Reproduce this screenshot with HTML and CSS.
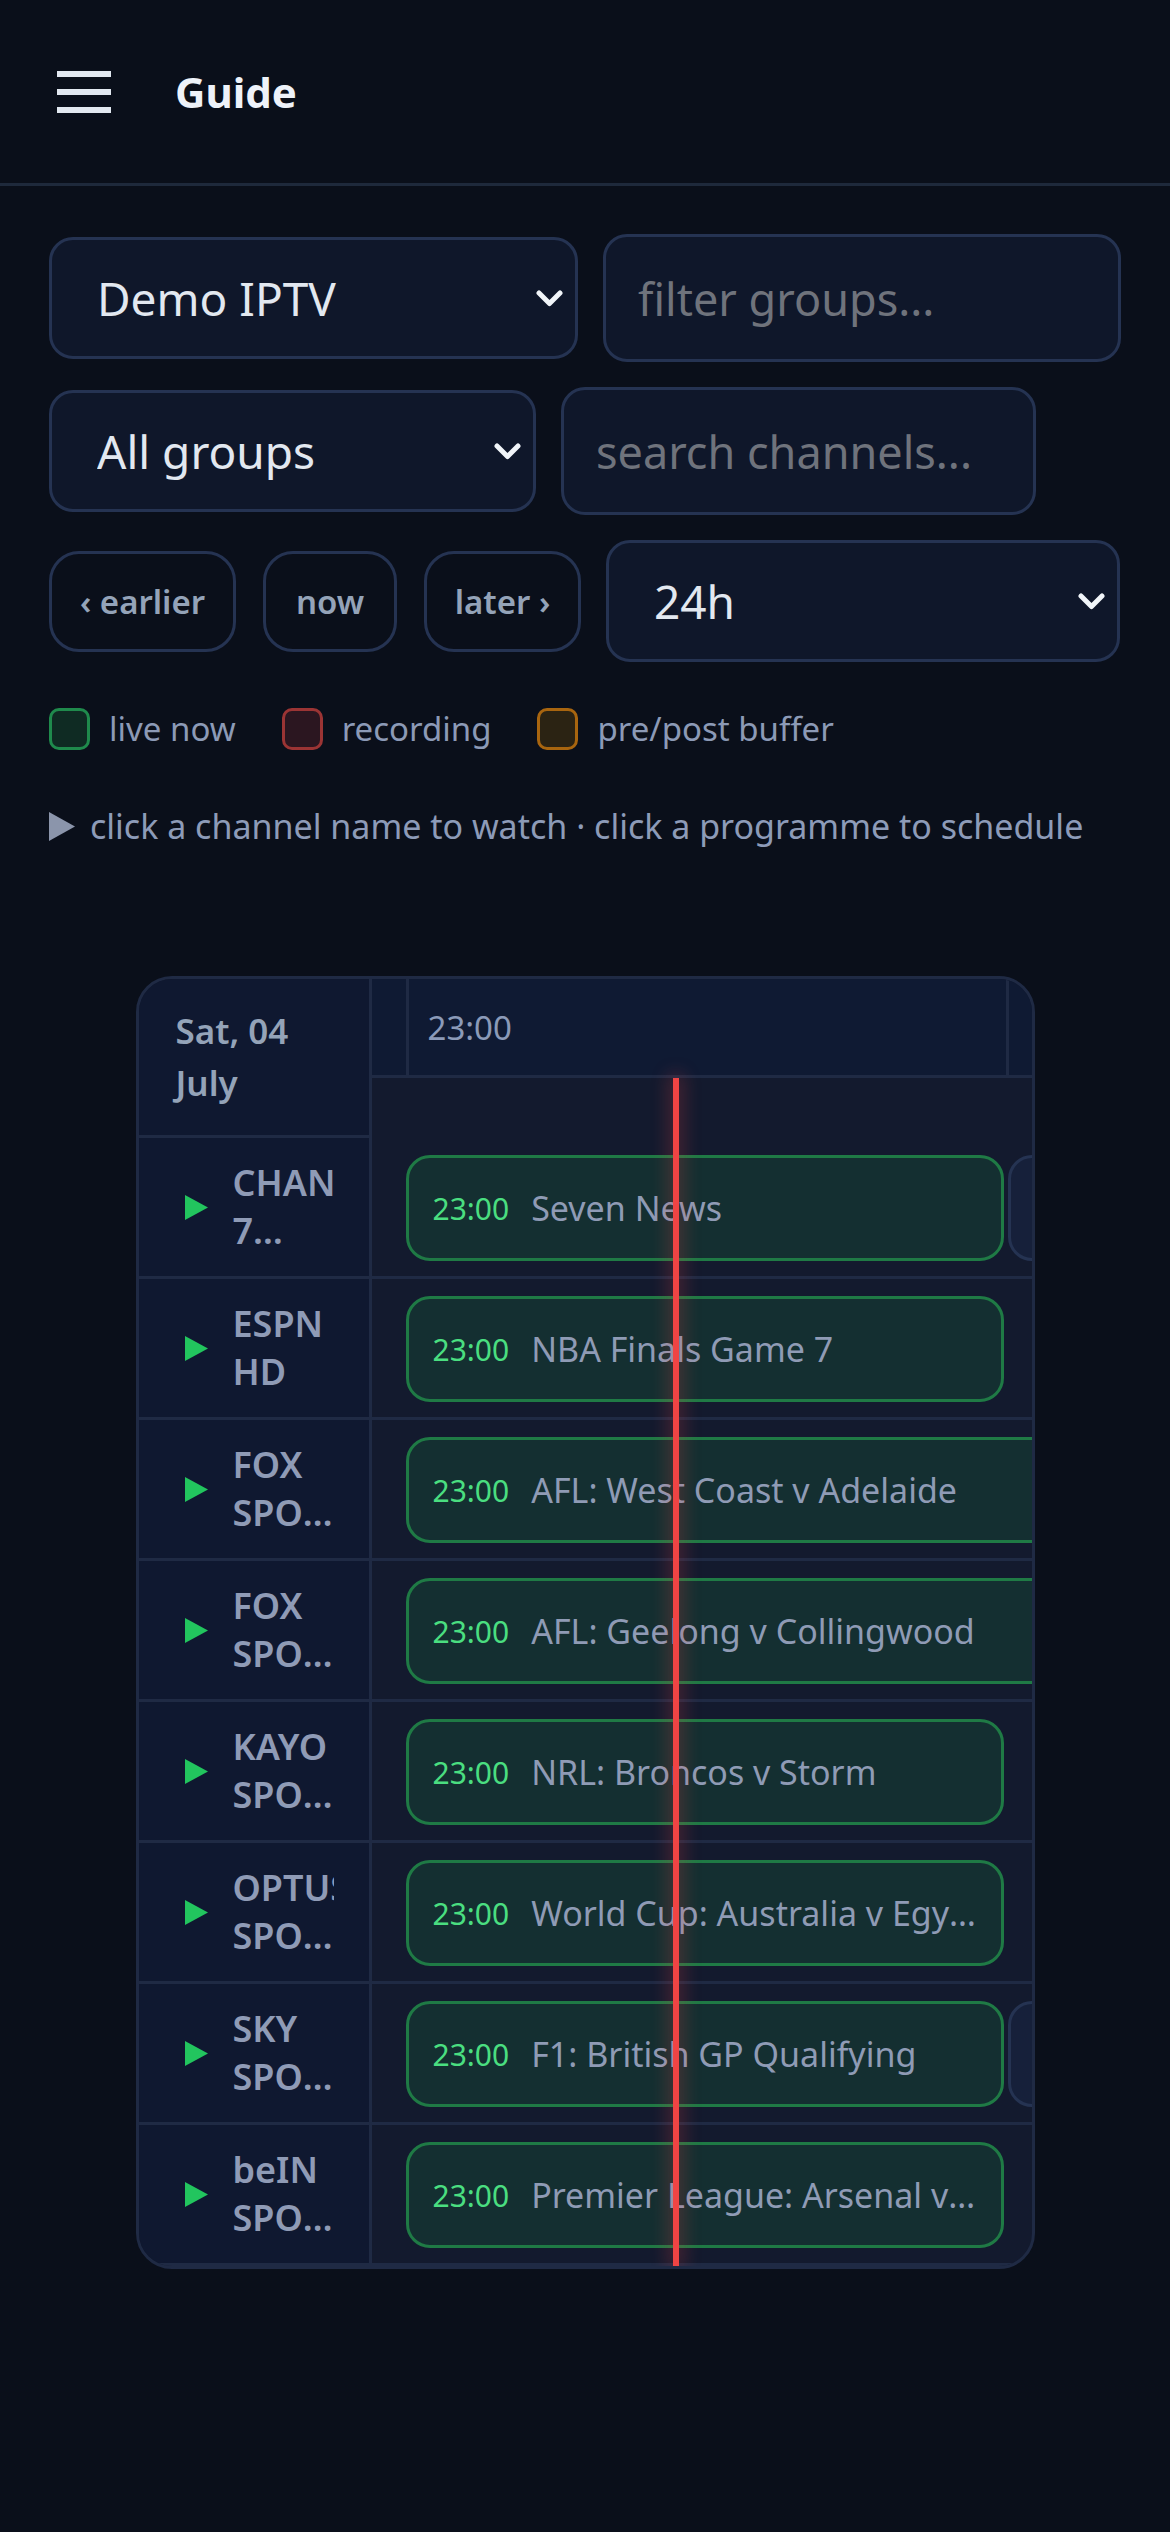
FILE: index.html
```html
<!DOCTYPE html>
<html lang="en">
<head>
    <meta charset="UTF-8">
    <meta name="viewport" content="width=device-width, initial-scale=1.0">
    <title>Guide</title>
    <link rel="stylesheet" href="styles.css">
</head>
<body>

    <!-- Top bar -->
    <header class="topbar">
        <button class="menu-btn" aria-label="menu"><span></span><span></span><span></span></button>
        <h1>Guide</h1>
    </header>

    <main class="page">

        <!-- Source / group / window controls -->
        <div class="toolbar">
            <select class="field field-select w-source"><option>Demo IPTV</option></select>
            <input class="field w-filter" type="text" placeholder="filter groups...">
            <select class="field field-select w-group"><option>All groups</option></select>
            <input class="field w-search" type="text" placeholder="search channels...">
            <div class="nav-group">
                <button class="nav-btn w-earlier">‹ earlier</button>
                <button class="nav-btn w-now">now</button>
                <button class="nav-btn w-later">later ›</button>
            </div>
            <select class="field field-select w-span"><option>24h</option></select>
        </div>

        <div class="legend">
            <span class="legend-item"><i class="swatch swatch-live"></i>live now</span>
            <span class="legend-item"><i class="swatch swatch-rec"></i>recording</span>
            <span class="legend-item"><i class="swatch swatch-buf"></i>pre/post buffer</span>
        </div>

        <p class="hint">
            <svg class="hint-play" viewBox="0 0 26 29"><path d="M0 0 L26 14.5 L0 29 Z"/></svg>
            click a channel name to watch · click a programme to schedule
        </p>

        <!-- EPG grid: 600px per hour, track starts at 22:56:42 -->
        <div class="guide">
            <div class="guide-head">
                <div class="date-cell">Sat, 04 July</div>
                <div class="time-head">
                    <div class="ruler">
                        <div class="slot slot-cut"></div>
                        <div class="slot">23:00</div>
                        <div class="slot"></div>
                    </div>
                </div>
            </div>

            <div class="row">
                <a class="chan" href="#"><svg class="play" viewBox="0 0 23 25"><path d="M0 0 L23 12.5 L0 25 Z"/></svg><span class="chan-name">CHANNEL 7 SYDNEY</span></a>
                <div class="track">
                    <div class="prog live" style="left:34px;width:598px"><span class="prog-time">23:00</span><span class="prog-title">Seven News</span></div>
                    <div class="prog" style="left:636px;width:598px"><span class="prog-time">00:00</span><span class="prog-title">Late News</span></div>
                </div>
            </div>
            <div class="row">
                <a class="chan" href="#"><svg class="play" viewBox="0 0 23 25"><path d="M0 0 L23 12.5 L0 25 Z"/></svg><span class="chan-name">ESPN HD</span></a>
                <div class="track">
                    <div class="prog live" style="left:34px;width:598px"><span class="prog-time">23:00</span><span class="prog-title">NBA Finals Game 7</span></div>
                </div>
            </div>
            <div class="row">
                <a class="chan" href="#"><svg class="play" viewBox="0 0 23 25"><path d="M0 0 L23 12.5 L0 25 Z"/></svg><span class="chan-name">FOX SPORTS 501</span></a>
                <div class="track">
                    <div class="prog live" style="left:34px;width:1798px"><span class="prog-time">23:00</span><span class="prog-title">AFL: West Coast v Adelaide</span></div>
                </div>
            </div>
            <div class="row">
                <a class="chan" href="#"><svg class="play" viewBox="0 0 23 25"><path d="M0 0 L23 12.5 L0 25 Z"/></svg><span class="chan-name">FOX SPORTS 503</span></a>
                <div class="track">
                    <div class="prog live" style="left:34px;width:1798px"><span class="prog-time">23:00</span><span class="prog-title">AFL: Geelong v Collingwood</span></div>
                </div>
            </div>
            <div class="row">
                <a class="chan" href="#"><svg class="play" viewBox="0 0 23 25"><path d="M0 0 L23 12.5 L0 25 Z"/></svg><span class="chan-name">KAYO SPORTS 1</span></a>
                <div class="track">
                    <div class="prog live" style="left:34px;width:598px"><span class="prog-time">23:00</span><span class="prog-title">NRL: Broncos v Storm</span></div>
                </div>
            </div>
            <div class="row">
                <a class="chan" href="#"><svg class="play" viewBox="0 0 23 25"><path d="M0 0 L23 12.5 L0 25 Z"/></svg><span class="chan-name">OPTUS SPORT 1</span></a>
                <div class="track">
                    <div class="prog live" style="left:34px;width:598px"><span class="prog-time">23:00</span><span class="prog-title">World Cup: Australia v Egypt</span></div>
                </div>
            </div>
            <div class="row">
                <a class="chan" href="#"><svg class="play" viewBox="0 0 23 25"><path d="M0 0 L23 12.5 L0 25 Z"/></svg><span class="chan-name">SKY SPORTS F1</span></a>
                <div class="track">
                    <div class="prog live" style="left:34px;width:598px"><span class="prog-time">23:00</span><span class="prog-title">F1: British GP Qualifying</span></div>
                    <div class="prog" style="left:636px;width:598px"><span class="prog-time">00:00</span><span class="prog-title">F1 Show</span></div>
                </div>
            </div>
            <div class="row">
                <a class="chan" href="#"><svg class="play" viewBox="0 0 23 25"><path d="M0 0 L23 12.5 L0 25 Z"/></svg><span class="chan-name">beIN SPORTS 1</span></a>
                <div class="track">
                    <div class="prog live" style="left:34px;width:598px"><span class="prog-time">23:00</span><span class="prog-title">Premier League: Arsenal v Chelsea</span></div>
                </div>
            </div>

            <!-- current time marker (23:27) -->
            <div class="now-line" style="left:534px"></div>
        </div>

    </main>

</body>
</html>
```

FILE: styles.css
```css
body {
    margin: 0;
    background-color: #0a0f1a;
    font-family: "Noto Sans", "Open Sans", sans-serif;
    color: #e2e8f0;
}

/* Top bar */
.topbar {
    height: 183px;
    border-bottom: 3px solid #1e293b;
    display: flex;
    align-items: center;
    gap: 64px;
    padding-left: 57px;
}

.menu-btn {
    width: 54px;
    height: 42px;
    padding: 0;
    border: none;
    background: none;
    display: flex;
    flex-direction: column;
    justify-content: space-between;
}

.menu-btn span {
    display: block;
    height: 6px;
    background-color: #e2e8f0;
}

.topbar h1 {
    margin: 0;
    font-size: 42px;
    font-weight: 700;
    color: #eef2f9;
}

.page {
    padding: 48px 49px 0;
}

/* Controls */
.toolbar {
    display: flex;
    flex-wrap: wrap;
    align-items: center;
    gap: 25px;
}

.field {
    box-sizing: border-box;
    height: 128px;
    padding: 0 32px;
    border: 3px solid #253352;
    border-radius: 24px;
    background-color: #0f172a;
    color: #e2e8f0;
    font-family: inherit;
    font-size: 45px;
    outline: none;
}

.field::placeholder {
    color: #6f737c;
}

.field-select {
    height: 122px;
    padding: 0 60px 0 45px;
    font-size: 46px;
    appearance: none;
    -webkit-appearance: none;
    background-image: url("data:image/svg+xml,%3Csvg xmlns='http://www.w3.org/2000/svg' viewBox='0 0 27 17'%3E%3Cpath d='M3 3 L13.5 13.5 L24 3' fill='none' stroke='%23f1f5f9' stroke-width='5' stroke-linecap='round' stroke-linejoin='round'/%3E%3C/svg%3E");
    background-repeat: no-repeat;
    background-position: right 12px center;
    background-size: 27px 17px;
}

.w-source { width: 529px; }
.w-filter { width: 518px; }
.w-group { width: 487px; }
.w-search { width: 475px; }
.w-span { width: 514px; }

.nav-group {
    display: flex;
    gap: 27px;
}

.nav-btn {
    box-sizing: border-box;
    height: 101px;
    padding: 0;
    border: 3px solid #253352;
    border-radius: 30px;
    background: transparent;
    color: #94a3b8;
    font-family: inherit;
    font-size: 33px;
    font-weight: 600;
    white-space: nowrap;
}

.w-earlier { width: 187px; }
.w-now { width: 134px; }
.w-later { width: 157px; }

/* Legend */
.legend {
    display: flex;
    align-items: center;
    gap: 46px;
    margin-top: 44px;
}

.legend-item {
    display: flex;
    align-items: center;
    gap: 19px;
    font-size: 33px;
    color: #8c9ab6;
}

.swatch {
    box-sizing: border-box;
    width: 41px;
    height: 42px;
    border: 3px solid;
    border-radius: 10px;
}

.swatch-live { border-color: #1f8a4c; background-color: #0f2b23; }
.swatch-rec { border-color: #9b3434; background-color: #2b1620; }
.swatch-buf { border-color: #a8650f; background-color: #2b2313; }

.hint {
    display: flex;
    align-items: center;
    gap: 15px;
    margin: 52px 0 0;
    font-size: 34px;
    color: #8d9bb8;
}

.hint-play {
    width: 26px;
    height: 29px;
    fill: #8b95ab;
}

/* Guide grid */
.guide {
    position: relative;
    width: 893px;
    margin: 127px auto 0;
    border: 3px solid #1f2a44;
    border-radius: 36px;
    overflow: hidden;
    background-color: #131a2e;
}

.guide-head {
    display: flex;
}

.date-cell {
    flex: none;
    box-sizing: border-box;
    width: 233px;
    height: 159px;
    padding: 0 37px;
    display: flex;
    align-items: center;
    border-right: 3px solid #1f2a44;
    border-bottom: 3px solid #1f2a44;
    background-color: #0f1830;
    font-size: 35px;
    font-weight: 600;
    line-height: 52px;
    color: #94a3b8;
}

.time-head {
    flex: 1;
    min-width: 0;
}

.ruler {
    display: flex;
    height: 99px;
    border-bottom: 3px solid #1f2a44;
    box-sizing: border-box;
    background-color: #0f1a33;
}

.slot {
    flex: none;
    box-sizing: border-box;
    width: 600px;
    padding: 26px 0 0 19px;
    border-left: 3px solid #1f2a44;
    font-size: 33px;
    color: #8b9ab8;
}

.slot-cut {
    width: 34px;
    padding: 0;
    border-left: none;
}

.row {
    display: flex;
    height: 141px;
    border-bottom: 3px solid #1f2a44;
    box-sizing: border-box;
}

.row:last-of-type {
    height: 138px;
    border-bottom: none;
}

.chan {
    box-sizing: border-box;
    flex: none;
    width: 233px;
    display: flex;
    align-items: center;
    gap: 25px;
    padding-left: 46px;
    border-right: 3px solid #1f2a44;
    background-color: #0f1830;
    text-decoration: none;
}

.play {
    flex: none;
    width: 23px;
    height: 25px;
    fill: #22c55e;
}

.chan-name {
    width: 101px;
    display: -webkit-box;
    -webkit-box-orient: vertical;
    -webkit-line-clamp: 2;
    overflow: hidden;
    font-size: 36px;
    font-weight: 600;
    line-height: 48px;
    color: #8f9bb6;
}

.track {
    position: relative;
    flex: 1;
}

.prog {
    position: absolute;
    top: 17px;
    height: 106px;
    box-sizing: border-box;
    display: flex;
    align-items: center;
    gap: 22px;
    padding: 0 24px;
    border: 3px solid #253352;
    border-radius: 24px;
    background-color: #16203a;
    white-space: nowrap;
    overflow: hidden;
}

.prog.live {
    border-color: #1f7a45;
    background-color: #142f31;
}

.prog-time {
    font-size: 30px;
    color: #4ade80;
}

.prog-title {
    overflow: hidden;
    text-overflow: ellipsis;
    font-size: 34px;
    color: #8f9bb5;
}

.now-line {
    position: absolute;
    top: 99px;
    bottom: 0;
    width: 6px;
    background-color: #ef4444;
    box-shadow: 0 0 18px 4px rgba(239, 68, 68, 0.28);
    z-index: 2;
}
```
